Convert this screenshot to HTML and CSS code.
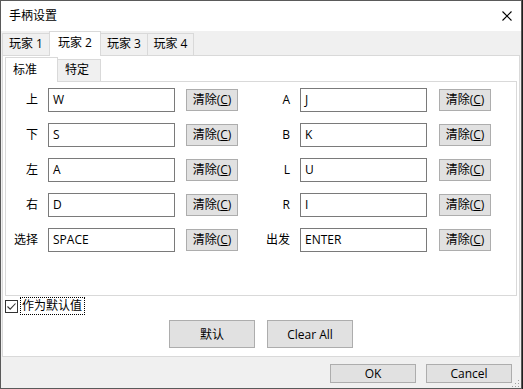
FILE: index.html
```html
<!DOCTYPE html>
<html lang="zh-CN">
<head>
  <meta charset="UTF-8">
  <title>手柄设置</title>
  <link rel="stylesheet" href="styles.css">
</head>
<body>
  <div class="window">
    <div class="titlebar">
      <span class="title">手柄设置</span>
      <svg class="close" width="10" height="10" viewBox="0 0 10 10">
        <path d="M0.5 0.5 L9.5 9.5 M9.5 0.5 L0.5 9.5" stroke="#000" stroke-width="1.1" fill="none"/>
      </svg>
    </div>

    <div class="client">
      <div class="tabs outer-tabs">
        <div class="tab t-p1">玩家 1</div>
        <div class="tab t-p2 active">玩家 2</div>
        <div class="tab t-p3">玩家 3</div>
        <div class="tab t-p4">玩家 4</div>
      </div>

      <div class="page">
        <div class="tabs inner-tabs">
          <div class="tab t-std active">标准</div>
          <div class="tab t-spec">特定</div>
        </div>

        <div class="inner-page">
          <div class="key-grid">
            <span class="key-label">上</span>
            <div class="key-input">W</div>
            <button class="clear-btn">清除(<u>C</u>)</button>
            <span class="key-label">A</span>
            <div class="key-input">J</div>
            <button class="clear-btn">清除(<u>C</u>)</button>

            <span class="key-label">下</span>
            <div class="key-input">S</div>
            <button class="clear-btn">清除(<u>C</u>)</button>
            <span class="key-label">B</span>
            <div class="key-input">K</div>
            <button class="clear-btn">清除(<u>C</u>)</button>

            <span class="key-label">左</span>
            <div class="key-input">A</div>
            <button class="clear-btn">清除(<u>C</u>)</button>
            <span class="key-label">L</span>
            <div class="key-input">U</div>
            <button class="clear-btn">清除(<u>C</u>)</button>

            <span class="key-label">右</span>
            <div class="key-input">D</div>
            <button class="clear-btn">清除(<u>C</u>)</button>
            <span class="key-label">R</span>
            <div class="key-input">I</div>
            <button class="clear-btn">清除(<u>C</u>)</button>

            <span class="key-label">选择</span>
            <div class="key-input">SPACE</div>
            <button class="clear-btn">清除(<u>C</u>)</button>
            <span class="key-label">出发</span>
            <div class="key-input">ENTER</div>
            <button class="clear-btn">清除(<u>C</u>)</button>
          </div>
        </div>

        <div class="check-row">
          <svg class="checkbox" width="13" height="13" viewBox="0 0 13 13">
            <rect x="0.5" y="0.5" width="12" height="12" fill="#fff" stroke="#333"/>
            <path d="M2.5 6.5 L5.2 9.2 L10.5 3.5" stroke="#333" stroke-width="1.1" fill="none"/>
          </svg>
          <span class="check-label">作为默认值</span>
        </div>

        <div class="actions">
          <button class="btn">默认</button>
          <button class="btn">Clear All</button>
        </div>
      </div>

      <div class="footer">
        <button class="btn footer-btn">OK</button>
        <button class="btn footer-btn">Cancel</button>
        <svg class="grip" width="9" height="9" viewBox="0 0 9 9">
          <rect x="7" y="1" width="1" height="1" fill="#a0a0a0"/>
          <rect x="4" y="4" width="1" height="1" fill="#a0a0a0"/>
          <rect x="7" y="4" width="1" height="1" fill="#a0a0a0"/>
          <rect x="1" y="7" width="1" height="1" fill="#a0a0a0"/>
          <rect x="4" y="7" width="1" height="1" fill="#a0a0a0"/>
          <rect x="7" y="7" width="1" height="1" fill="#a0a0a0"/>
        </svg>
      </div>
    </div>
  </div>
</body>
</html>
```

FILE: styles.css
```css
html, body {
  margin: 0;
  padding: 0;
}
body {
  background: #1f1f1f;
  font-family: "Open Sans", "Noto Sans CJK SC", sans-serif;
  font-size: 12px;
  color: #000;
}
button {
  font-family: inherit;
  font-size: 12px;
  color: #000;
  padding: 0;
  margin: 0;
  background: #e1e1e1;
  border: 1px solid #adadad;
  box-sizing: border-box;
}
.window {
  width: 522px;
  height: 389px;
  box-sizing: border-box;
  border: 1px solid #5a5a5a;
  background: #f0f0f0;
  display: flex;
  flex-direction: column;
}
.titlebar {
  height: 30px;
  flex: none;
  background: #fff;
  display: flex;
  align-items: center;
  justify-content: space-between;
  padding: 0 9px 0 8px;
}
.title {
  line-height: 16px;
}
.close {
  display: block;
}
.client {
  flex: 1;
  display: flex;
  flex-direction: column;
  padding: 0 1px;
}

/* tabs */
.tabs {
  display: flex;
  align-items: flex-end;
  height: 24px;
  flex: none;
}
.tab {
  box-sizing: border-box;
  height: 22px;
  border: 1px solid #d9d9d9;
  border-bottom: none;
  background: #f0f0f0;
  line-height: 20px;
  text-align: center;
  white-space: nowrap;
}
.tab + .tab {
  margin-left: -1px;
}
.tab.active {
  height: 25px;
  margin-bottom: -1px;
  background: #fff;
  line-height: 22px;
  position: relative;
  z-index: 1;
}
.t-p1 { width: 48px; }
.t-p2 { width: 52px; }
.t-p3 { width: 48px; }
.t-p4 { width: 47px; }
.t-std {
  width: 53px;
  text-align: left;
  padding-left: 7px;
}
.t-spec {
  width: 44px;
  text-align: left;
  padding-left: 7px;
}
.inner-tabs .tab.active {
  line-height: 23px;
}

.page {
  height: 302px;
  flex: none;
  box-sizing: border-box;
  background: #fff;
  border: 1px solid #d9d9d9;
  padding: 1px 2px 0;
}
.inner-page {
  height: 215px;
  box-sizing: border-box;
  border: 1px solid #d9d9d9;
  padding: 6px 0 0 8px;
}
.key-grid {
  display: grid;
  grid-template-columns: 24px 127px 53px 42px 127px 54px;
  grid-auto-rows: 24px;
  column-gap: 10px;
  row-gap: 11px;
  align-items: center;
}
.key-label {
  justify-self: end;
  line-height: 16px;
  white-space: nowrap;
}
.key-input {
  height: 24px;
  box-sizing: border-box;
  border: 1px solid #7a7a7a;
  padding: 0 4px;
  line-height: 22px;
}
.clear-btn {
  justify-self: end;
  width: 52px;
  height: 22px;
  line-height: 20px;
}
.clear-btn u {
  text-underline-offset: 1px;
}

.check-row {
  display: flex;
  align-items: center;
  height: 18px;
  margin-top: 1px;
}
.checkbox {
  display: block;
}
.check-label {
  margin-left: 2px;
  border: 1px dotted #000;
  padding: 0 2px 0 1px;
  line-height: 16px;
}
.actions {
  display: flex;
  justify-content: center;
  gap: 12px;
  margin-top: 5px;
}
.btn {
  width: 86px;
  height: 28px;
}
.footer {
  flex: 1;
  display: flex;
  justify-content: flex-end;
  align-items: flex-start;
  gap: 10px;
  padding: 7px 8px 0 0;
  position: relative;
}
.footer-btn {
  height: 19px;
  line-height: 17px;
}
.grip {
  position: absolute;
  right: 0;
  bottom: 0;
}
```
